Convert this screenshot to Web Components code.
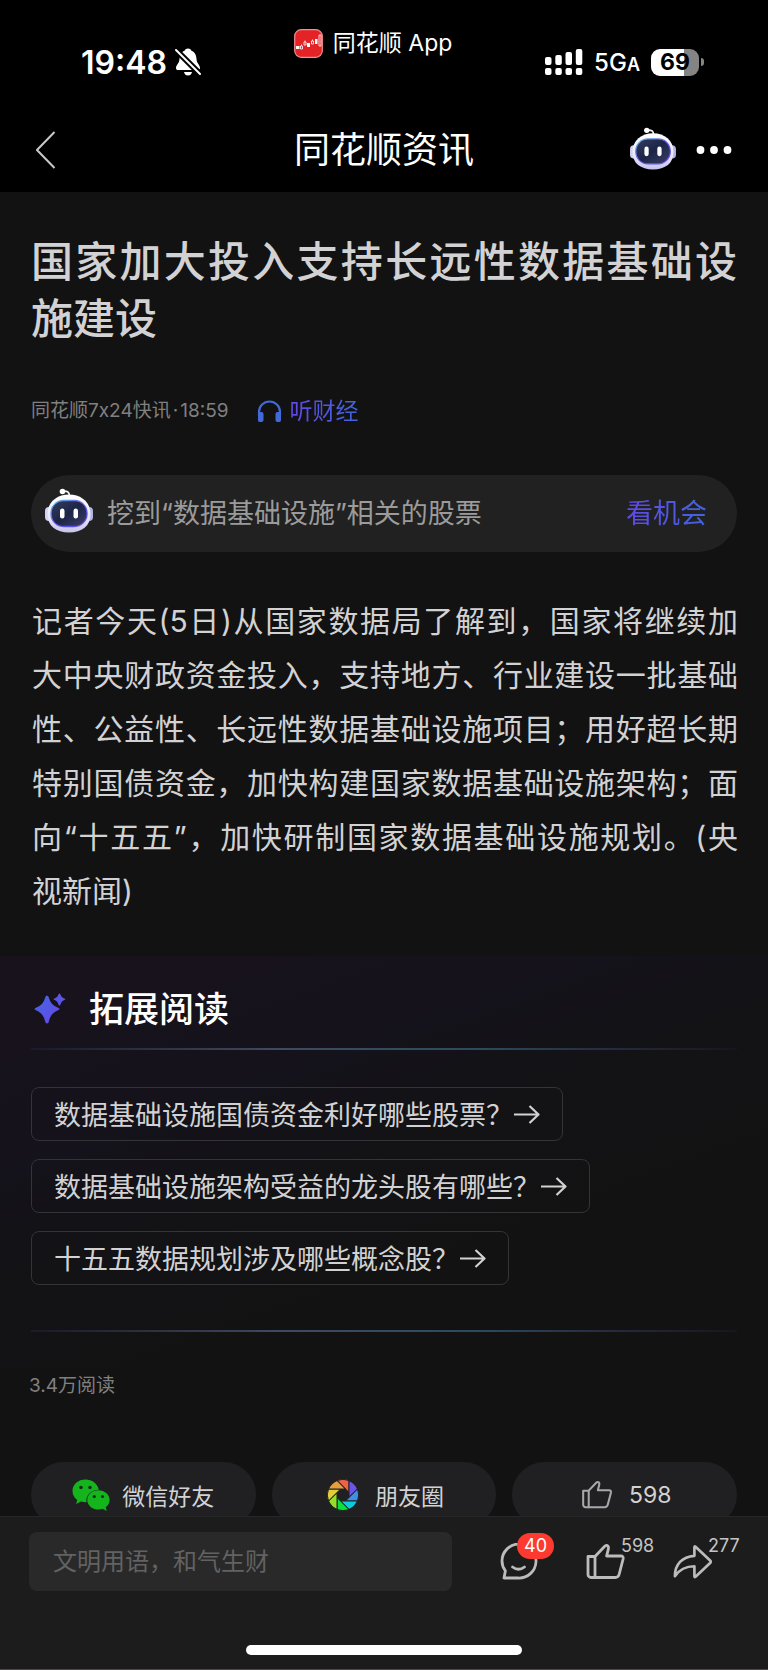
<!DOCTYPE html>
<html lang="zh-CN">
<head>
<meta charset="utf-8">
<meta name="viewport" content="width=device-width, initial-scale=1">
<title>同花顺资讯</title>
<style>
    body {
        margin: 0;
        background: #121212;
        color: #d2d2d4;
        font-family: Inter, "Noto Sans CJK SC", sans-serif;
    }
</style>
</head>
<body>
<news-app>
    <status-bar slot="top" time="19:48" app="同花顺 App" network="5G" battery="69"></status-bar>
    <nav-bar slot="top" heading="同花顺资讯"></nav-bar>

    <article-header heading="国家加大投入支持长远性数据基础设施建设" source="同花顺7x24快讯" time="18:59"></article-header>
    <stock-hint action="看机会">挖到“数据基础设施”相关的股票</stock-hint>
    <article-body>
        <span>记者今天(5日)从国家数据局了解到，国家将继续加</span>
        <span>大中央财政资金投入，支持地方、行业建设一批基础</span>
        <span>性、公益性、长远性数据基础设施项目；用好超长期</span>
        <span>特别国债资金，加快构建国家数据基础设施架构；面</span>
        <span>向“十五五”，加快研制国家数据基础设施规划。(央</span>
        <span>视新闻)</span>
    </article-body>
    <extended-reading heading="拓展阅读">
        <question-chip>数据基础设施国债资金利好哪些股票？</question-chip>
        <question-chip>数据基础设施架构受益的龙头股有哪些？</question-chip>
        <question-chip>十五五数据规划涉及哪些概念股？</question-chip>
    </extended-reading>
    <share-row reads="3.4万阅读">
        <share-button icon="wechat">微信好友</share-button>
        <share-button icon="moments">朋友圈</share-button>
        <share-button icon="like">598</share-button>
    </share-row>

    <comment-bar slot="bottom" placeholder="文明用语，和气生财">
        <bar-action icon="comment" label="评论" count="40" alert></bar-action>
        <bar-action icon="like" label="点赞" count="598"></bar-action>
        <bar-action icon="share" label="分享" count="277"></bar-action>
    </comment-bar>
</news-app>

<script>
// Shared icon markup
const thumb = `
    <path d="M2 13.5h7v21H5a3 3 0 0 1-3-3z"/>
    <path d="M9 13.5 18.5 3.5q2-2 3.5-.3.8 1 .4 2.600L20.600 13h14.200q3 0 2.300 3l-4 15.500q-.8 3-3.900 3H9"/>`;

const icons = {
    wechat: `<svg width="38" height="32" viewBox="0 0 38 32" aria-hidden="true">
        <path fill="#14b51c" d="M13.500.5C6 .5.500 5.400.500 12c0 3.800 1.800 6.700 4.800 9L4 25l5-2.600q2 .8 5.500.8c-1-6.800 4.500-12.400 12.400-12.400C25.400 4.400 20 .5 13.500.5z"/>
        <path fill="#14b51c" d="M26.300 11.300c-6.200 0-11 4.300-11 9.600s4.800 9.600 11 9.600q2.500 0 4.400-.7l4 2.200-1-3.700c2.500-1.900 3.900-4.500 3.900-7.400 0-5.300-5.100-9.600-11.300-9.600z"/>
        <g fill="#1d2b1f"><circle cx="9" cy="8.500" r="1.800"/><circle cx="18" cy="8.500" r="1.800"/><circle cx="22.300" cy="17.500" r="1.600"/><circle cx="30.500" cy="17.500" r="1.600"/></g>
    </svg>`,
    moments: `<svg width="32" height="32" viewBox="-16 -16 32 32" stroke="#202022" stroke-width="1" aria-hidden="true">
        ${['#ee6248', '#6b55e6', '#3d92e4', '#0bcbdc', '#0ddf3f', '#97de2b', '#dfce38', '#e5a03c'].map((color, i) =>
            `<path fill="${color}" transform="rotate(${i * 45})" d="M6-2.500V-14.500A15.700 15.700 0 0 0-6-14.500Z"/>`).join('')}
    </svg>`,
    like: `<svg class="line" viewBox="0 0 39 38" aria-hidden="true">${thumb}</svg>`,
    comment: `<svg class="line" viewBox="0 0 39 38" aria-hidden="true">
        <path d="M5 35h14a17 17 0 1 0-16-17q0 5.500 3.400 9.800L5 35z"/>
        <path d="M13.500 24q6 4.500 12 0"/>
    </svg>`,
    share: `<svg class="line" viewBox="0 0 41 38" aria-hidden="true">
        <path d="M22.500 3.500v9C9.500 13.500 2 21.500 2 34c5-7.500 11-10.500 20.500-10.500v10.500q0 1.500 1.200.5L39 20q1.300-1.300 0-2.600L23.700 3q-1.200-.9-1.200.5z"/>
    </svg>`,
    robot: `<svg viewBox="0 0 48 46" aria-hidden="true">
        <defs>
            <linearGradient id="shell" x1="0" y1="0" x2="0" y2="1"><stop offset="0" stop-color="#fff"/><stop offset=".65" stop-color="#e6e4fb"/><stop offset="1" stop-color="#c4c3ea"/></linearGradient>
            <linearGradient id="rim" x1="0" y1="0" x2="1" y2="1"><stop offset="0" stop-color="#56bde0"/><stop offset=".5" stop-color="#7357e8"/><stop offset=".8" stop-color="#4d50e8"/><stop offset="1" stop-color="#c254e8"/></linearGradient>
            <linearGradient id="face" x1="0" y1="0" x2="1" y2="1"><stop offset="0" stop-color="#343b60"/><stop offset=".5" stop-color="#1c2547"/><stop offset="1" stop-color="#3b4066"/></linearGradient>
        </defs>
        <path d="M17 3.500q8-1.500 7.500 5" fill="none" stroke="#f0f0fb" stroke-width="1.800"/>
        <circle cx="17.500" cy="3.500" r="2.800" fill="#fff"/>
        <rect y="19" width="8" height="14" rx="4" fill="#d3d2f0"/><rect x="40" y="19" width="8" height="14" rx="4" fill="#b5b4df"/>
        <path fill="url(#shell)" d="M24 6.500C36 6.500 45.500 14 45.500 26c0 12-8.500 18.500-21.500 18.500S2.500 38 2.500 26C2.500 14 12 6.500 24 6.500z"/>
        <rect x="6" y="12.500" width="36" height="26" rx="12.500" fill="url(#face)" stroke="url(#rim)" stroke-width="1.300"/>
        <rect x="15" y="20.500" width="4.500" height="10" rx="2.200" fill="#fff"/><rect x="28.500" y="20.500" width="4.500" height="10" rx="2.200" fill="#fff"/>
    </svg>`,
};

// Base class: puts the element's markup in an open shadow root
class BaseElement extends HTMLElement {
    connectedCallback() {
        if (this.shadowRoot) return;
        const template = document.createElement('template');
        template.innerHTML = this.render();
        this.attachShadow({ mode: 'open' }).appendChild(template.content.cloneNode(true));
    }

    attr(name) {
        return this.getAttribute(name) || '';
    }
}

// Page shell: fixed top and bottom, scrolling middle
class NewsApp extends BaseElement {
    render() {
        return `
        <style>
            :host { display: flex; flex-direction: column; height: 100vh; }
            header { background: #000; }
            main { flex: 1; min-height: 0; overflow-y: auto; scrollbar-width: none; }
        </style>
        <header><slot name="top"></slot></header>
        <main><slot></slot></main>
        <slot name="bottom"></slot>`;
    }
}

class StatusBar extends BaseElement {
    render() {
        return `
        <style>
            :host { display: flex; justify-content: space-between; align-items: flex-end; height: 48px; padding: 28px 64px 31px 81px; color: #fff; }
            div { display: flex; align-items: center; height: 28px; }
            .time { gap: 8px; font-size: 32px; font-weight: 600; }
            .app { align-self: flex-start; gap: 10px; height: 30px; font-size: 23px; line-height: 28px; }
            .signal { gap: 11px; font-size: 24px; font-weight: 500; }
            small { font-size: 18px; font-weight: 600; }
            .battery { gap: 2px; }
            .level {
                width: 48px;
                height: 27px;
                border-radius: 9px;
                background: linear-gradient(90deg, #fff 69%, #848484 69%);
                color: #000;
                font-size: 23px;
                font-weight: 700;
                line-height: 27px;
                text-align: center;
            }
            .nub { width: 3px; height: 8px; border-radius: 0 4px 4px 0; background: #848484; }
        </style>
        <div class="time">
            <span>${this.attr('time')}</span>
            <svg width="26" height="28" viewBox="0 0 26 28" aria-hidden="true">
                <path fill="#fff" d="M13 .5c2 0 3 1 3.400 2.200C20 4 21.300 7 21.500 11c.2 4.500 3.500 6 3.500 9 0 1.500-.8 2-2 2H3c-1.200 0-2-.5-2-2 0-3 3.300-4.500 3.500-9C4.700 7 6 4 9.600 2.700 10 1.500 11 .5 13 .5zM9 24h8q-.8 3.500-4 3.500T9 24z"/>
                <path d="M0 1 25 26" stroke="#000" stroke-width="6"/>
                <path d="M1 2 25 26" stroke="#fff" stroke-width="2" stroke-linecap="round"/>
            </svg>
        </div>
        <div class="app">
            <svg width="29" height="29" viewBox="0 0 29 29" aria-hidden="true">
                <rect x=".7" y=".7" width="27.600" height="27.600" rx="6.500" fill="#e32326" stroke="#f28d90" stroke-width="1.200"/>
                <path fill="#fff" d="M2 17h3.500v3H2zM13 14h3v4h-3zM21 10h2.500v5H21z"/>
                <path fill="none" stroke="#fff" stroke-width=".8" d="M6.500 17h2v3h-2zM7.500 15.500V17M10 13h2v3h-2zM11 11.500V13M17.500 12h2v3h-2zM18.500 10.500V12M25 6h2v11h-2z"/>
            </svg>
            <span>${this.attr('app')}</span>
        </div>
        <div class="signal">
            <svg width="38" height="28" viewBox="0 0 38 28" fill="#fff" aria-hidden="true">
                <rect x="0" y="9" width="6.500" height="8" rx="2"/><rect x="10.300" y="7" width="6.500" height="10" rx="2"/><rect x="20.500" y="4" width="6.500" height="13" rx="2"/><rect x="30.800" y="1" width="6.500" height="16" rx="2"/>
                <rect x="0" y="20" width="6.500" height="7" rx="2"/><rect x="10.300" y="20" width="6.500" height="7" rx="2"/><rect x="20.500" y="20" width="6.500" height="7" rx="2"/><rect x="30.800" y="20" width="6.500" height="7" rx="2"/>
            </svg>
            <span>${this.attr('network')}<small>A</small></span>
            <div class="battery"><span class="level">${this.attr('battery')}</span><span class="nub"></span></div>
        </div>`;
    }
}

class NavBar extends BaseElement {
    render() {
        return `
        <style>
            :host { display: grid; grid-template-columns: 1fr auto 1fr; align-items: center; height: 85px; padding: 0 36px; color: #fff; }
            h1 { margin: 0; font-size: 36px; font-weight: 400; line-height: 48px; }
            button { display: flex; padding: 0; border: 0; background: none; }
            .actions { display: flex; justify-content: flex-end; align-items: center; gap: 20px; }
            .robot { padding-bottom: 2px; }
            .robot svg { width: 46px; height: 44px; }
        </style>
        <button aria-label="返回">
            <svg width="20" height="38" viewBox="0 0 20 38" aria-hidden="true"><path d="M18.500 1 1 19l17.500 18" fill="none" stroke="#c8c8c8" stroke-width="2"/></svg>
        </button>
        <h1>${this.attr('heading')}</h1>
        <div class="actions">
            <button class="robot" aria-label="问财">${icons.robot}</button>
            <button aria-label="更多">
                <svg width="36" height="8" viewBox="0 0 36 8" fill="#fff" aria-hidden="true"><circle cx="4.500" cy="4" r="3.900"/><circle cx="18" cy="4" r="3.900"/><circle cx="31.500" cy="4" r="3.900"/></svg>
            </button>
        </div>`;
    }
}

class ArticleHeader extends BaseElement {
    render() {
        return `
        <style>
            :host { display: block; padding: 41px 31px 0; }
            h2 { margin: 0; font-size: 42px; font-weight: 500; line-height: 57px; text-align: justify; }
            .meta { display: flex; align-items: center; gap: 29px; margin-top: 49px; font-size: 19px; line-height: 30px; color: #808080; }
            i { margin: 0 2px; font-style: normal; }
            button { display: flex; align-items: center; gap: 7px; padding: 0; border: 0; background: none; font: inherit; font-size: 23px; }
            b { font-weight: 400; color: transparent; background: linear-gradient(90deg, #6048e6, #4165e0); background-clip: text; }
        </style>
        <h2>${this.attr('heading')}</h2>
        <div class="meta">
            <span>${this.attr('source')}<i>·</i>${this.attr('time')}</span>
            <button>
                <svg width="25" height="24" viewBox="0 0 25 24" aria-hidden="true">
                    <path d="M2 17v-4a10.500 10.500 0 0 1 21 0v4" fill="none" stroke="#4269d8" stroke-width="2.200"/>
                    <path d="M1 13h3.500q2 0 2 2v6q0 2-2 2H2.500Q1 23 1 21zM24 13h-3.500q-2 0-2 2v6q0 2 2 2h2q1.500 0 1.500-2z" fill="#4269d8"/>
                </svg>
                <b>听财经</b>
            </button>
        </div>`;
    }
}

class StockHint extends BaseElement {
    render() {
        return `
        <style>
            :host { display: flex; align-items: center; gap: 14px; height: 77px; margin: 49px 31px 0; padding: 0 30px 0 14px; box-sizing: border-box; border-radius: 39px; background: #212121; font-size: 27px; line-height: 36px; color: #9b9b9b; }
            svg { width: 48px; height: 46px; margin-bottom: 6px; }
            p { flex: 1; margin: 0; }
            a { text-decoration: none; color: transparent; background: linear-gradient(90deg, #6048e6, #4165e0); background-clip: text; }
        </style>
        ${icons.robot}
        <p><slot></slot></p>
        <a href="#">${this.attr('action')}</a>`;
    }
}

class ArticleBody extends BaseElement {
    render() {
        return `
        <style>
            :host { display: block; padding: 42px 30px 38px 32px; font-size: 30px; line-height: 54px; }
            ::slotted(span) { display: block; text-align: justify; text-align-last: justify; }
            ::slotted(span:last-child) { text-align-last: left; }
        </style>
        <slot></slot>`;
    }
}

class ExtendedReading extends BaseElement {
    render() {
        return `
        <style>
            :host { display: block; padding: 30px 31px 38px; background: linear-gradient(160deg, #19121d 0%, #15121b 30%, #131216 45%, #121212 75%); }
            header { display: flex; align-items: center; gap: 22px; padding: 0 0 16px 2px; color: #fff; }
            h3 { margin: 0; font-size: 35px; font-weight: 500; line-height: 46px; }
            hr { height: 2px; margin: 0; border: 0; background: linear-gradient(90deg, #1a1a28, #3e4a60 35%, #2b4c5c 63%, #262b40 82%, #181520); }
            .list { display: flex; flex-direction: column; align-items: flex-start; gap: 18px; padding: 37px 0 45px; }
        </style>
        <header>
            <svg width="34" height="34" viewBox="0 0 34 34" aria-hidden="true">
                <defs><linearGradient id="star" x1="0" y1="0" x2="1" y2="1"><stop offset="0" stop-color="#4169e4"/><stop offset="1" stop-color="#6846e6"/></linearGradient></defs>
                <path fill="url(#star)" d="M14 3.500q1.500 0 2 2.500 1.500 7 9.500 10 2 1 0 2-8 3-9.500 11-.5 2.500-2 2.500t-2-2.500Q10.500 21 2.500 18q-2-1 0-2 8-3 9.500-10 .5-2.500 2-2.500z"/>
                <path fill="#5b55e6" d="M26.500 1.500q.8 0 1 1 .8 3 4.500 4.300 1 .5 0 1-3.700 1.300-4.500 4.700-.2 1-1 1t-1-1q-.8-3.400-4.500-4.700-1-.5 0-1 3.700-1.300 4.500-4.300.2-1 1-1z"/>
            </svg>
            <h3>${this.attr('heading')}</h3>
        </header>
        <hr>
        <div class="list"><slot></slot></div>
        <hr>`;
    }
}

class QuestionChip extends BaseElement {
    render() {
        return `
        <style>
            :host { display: block; }
            button { display: flex; align-items: center; height: 54px; padding: 0 22px; border: 1px solid #343337; border-radius: 8px; background: none; font: inherit; font-size: 27px; color: #d2d2d4; }
            span { padding-bottom: 2px; }
        </style>
        <button>
            <span><slot></slot></span>
            <svg width="27" height="20" viewBox="0 0 27 20" fill="none" stroke="#d2d2d4" stroke-width="2.200" stroke-linejoin="round" aria-hidden="true"><path d="M1 10.500h24M16.500 2l9 8.500-9 8.500"/></svg>
        </button>`;
    }
}

class ShareRow extends BaseElement {
    render() {
        return `
        <style>
            :host { display: block; padding: 2px 31px 40px; }
            p { margin: 0 0 62px -2px; font-size: 19px; line-height: 28px; color: #808080; }
            .row { display: grid; grid-template-columns: repeat(3, 1fr); gap: 16px; }
        </style>
        <p>${this.attr('reads')}</p>
        <div class="row"><slot></slot></div>`;
    }
}

class ShareButton extends BaseElement {
    render() {
        return `
        <style>
            :host { display: block; }
            button { display: flex; justify-content: center; align-items: center; gap: 12px; width: 100%; height: 65px; padding: 0; border: 0; border-radius: 33px; background: #202022; font: inherit; font-size: 23px; color: #d2d2d4; }
            :host([icon="moments"]) button, :host([icon="like"]) button { gap: 16px; padding-left: 3px; }
            .line { width: 32px; height: 30px; fill: none; stroke: #a8a8aa; stroke-width: 2.600; stroke-linejoin: round; stroke-linecap: round; }
        </style>
        <button>${icons[this.attr('icon')]}<slot></slot></button>`;
    }
}

class CommentBar extends BaseElement {
    render() {
        return `
        <style>
            :host { display: block; border-top: 1px solid #262626; border-bottom: 1px solid #4c484a; background: #1c1c1c; }
            .row { display: flex; align-items: center; gap: 47px; padding: 15px 55px 54px 29px; }
            input { flex: 1; min-width: 0; height: 59px; box-sizing: border-box; padding: 0 24px; border: 0; border-radius: 8px; background: #292929; font: inherit; font-size: 24px; color: #d2d2d4; }
            input::placeholder { color: #626262; opacity: 1; }
            .home { width: 36%; height: 10px; margin: 0 auto 14px; border-radius: 5px; background: #fff; }
        </style>
        <div class="row">
            <input type="text" aria-label="评论" placeholder="${this.attr('placeholder')}">
            <slot></slot>
        </div>
        <div class="home"></div>`;
    }
}

class BarAction extends BaseElement {
    render() {
        return `
        <style>
            :host { display: block; }
            button { position: relative; display: flex; width: 40px; padding: 0; border: 0; background: none; font: inherit; color: #c4c4c4; }
            .line { width: 39px; height: 38px; fill: none; stroke: #bcbcbc; stroke-width: 2.800; stroke-linejoin: round; stroke-linecap: round; }
            .count { position: absolute; left: 35px; top: -10px; font-size: 18px; line-height: 26px; }
            :host([alert]) .count { left: 18px; padding: 0 7px; border-radius: 13px; background: #fc3a30; color: #fff; }
        </style>
        <button aria-label="${this.attr('label')} ${this.attr('count')}">${icons[this.attr('icon')]}<span class="count">${this.attr('count')}</span></button>`;
    }
}

customElements.define('news-app', NewsApp);
customElements.define('status-bar', StatusBar);
customElements.define('nav-bar', NavBar);
customElements.define('article-header', ArticleHeader);
customElements.define('stock-hint', StockHint);
customElements.define('article-body', ArticleBody);
customElements.define('extended-reading', ExtendedReading);
customElements.define('question-chip', QuestionChip);
customElements.define('share-row', ShareRow);
customElements.define('share-button', ShareButton);
customElements.define('comment-bar', CommentBar);
customElements.define('bar-action', BarAction);
</script>
</body>
</html>
